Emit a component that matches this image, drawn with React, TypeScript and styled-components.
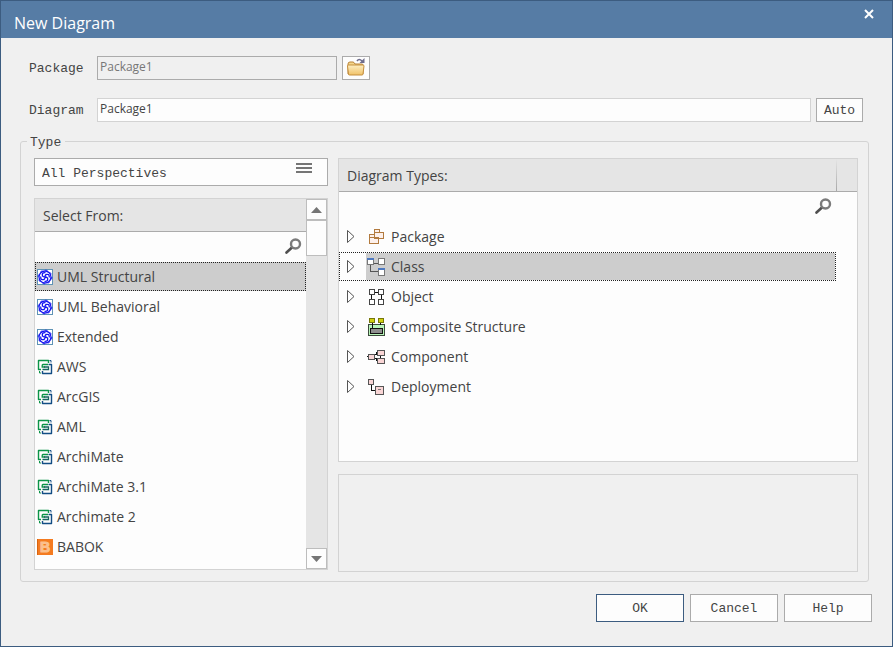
import React, { useState } from "react";
import styled, { createGlobalStyle, css } from "styled-components";

const ui = '"Open Sans", "Noto Sans", sans-serif';
const mono = '"Liberation Mono", monospace';
const ink = "#444444";
const line = "#d3d3d3";
const edge = "#ababab";

const GlobalStyle = createGlobalStyle`
  *, *::before, *::after { box-sizing: border-box; }
  body { margin: 0; background: #f0f0f0; color: ${ink}; font-family: ${ui}; }
  button, input, select { font: inherit; color: inherit; margin: 0; }
  ul { list-style: none; margin: 0; padding: 0; }
  svg { display: block; flex: none; }
`;

const Dialog = styled.main`
  display: flex;
  flex-direction: column;
  min-height: 100vh;
  border: 1px solid #3c5c80;
  background: #f0f0f0;
`;

const TitleBar = styled.header`
  display: flex;
  justify-content: space-between;
  align-items: flex-start;
  height: 37px;
  padding-left: 13px;
  background: #567ca5;
  color: #ffffff;
`;

const Title = styled.h1`
  margin: 0;
  font-size: 16px;
  font-weight: 400;
  line-height: 22px;
  padding-top: 11px;
`;

const CloseButton = styled.button`
  display: grid;
  place-items: center;
  width: 46px;
  height: 26px;
  padding: 0;
  border: 0;
  background: transparent;
`;

const Form = styled.form`
  display: flex;
  flex: 1;
  flex-direction: column;
  padding: 18px 20px 24px 19px;
`;

const Field = styled.div`
  display: flex;
  align-items: center;
  gap: 5px;
  height: 24px;
  margin: 0 9px 18px;
`;

const FieldLabel = styled.label`
  width: 63px;
  padding-top: 2px;
  font: 13px/18px ${mono};
`;

const TextBox = styled.input<{ $muted?: boolean }>`
  flex: ${(p) => (p.$muted ? "0 0 240px" : "1")};
  min-width: 0;
  height: 24px;
  padding: 0 2px 3px;
  border: 1px solid ${(p) => (p.$muted ? edge : line)};
  background: ${(p) => (p.$muted ? "#f0f0f0" : "#fdfdfd")};
  color: ${(p) => (p.$muted ? "#777777" : ink)};
  font-size: 12px;
`;

const PushButton = styled.button<{ $width: number; $main?: boolean }>`
  display: grid;
  place-items: center;
  width: ${(p) => p.$width}px;
  height: 100%;
  padding: 2px 0 0;
  border: 1px solid ${(p) => (p.$main ? "#3c5c80" : edge)};
  background: #fdfdfd;
  font: 13px/18px ${mono};
`;

const IconButton = styled(PushButton)`
  padding: 0;
`;

const Group = styled.fieldset`
  display: flex;
  flex: 1;
  min-width: 0;
  margin: -8px 3px 12px 0;
  padding: 7px 10px 11px 13px;
  border: 1px solid ${line};
  border-radius: 3px;
`;

const Legend = styled.legend`
  margin-left: -7px;
  padding: 2px 4px 0 3px;
  font: 13px/17px ${mono};
`;

const Columns = styled.div`
  display: grid;
  flex: 1;
  grid-template-columns: 294px minmax(0, 1fr);
  gap: 10px;
`;

const Column = styled.div`
  display: flex;
  flex-direction: column;
  gap: 12px;
`;

const Perspective = styled.div`
  position: relative;
  height: 28px;

  svg {
    position: absolute;
    top: 5px;
    right: 16px;
    pointer-events: none;
  }
`;

const PerspectiveSelect = styled.select`
  width: 100%;
  height: 100%;
  padding: 3px 40px 0 7px;
  border: 1px solid ${edge};
  border-radius: 0;
  background: #fdfdfd;
  appearance: none;
  font: 13px/18px ${mono};
`;

const Panel = styled.section`
  display: flex;
  flex: 1;
  border: 1px solid ${line};
  background: #fdfdfd;
`;

const PanelMain = styled.div`
  flex: 1;
  min-width: 0;
`;

const PanelHeader = styled.div`
  display: flex;
  justify-content: space-between;
  height: 33px;
  padding: 0 20px 0 8px;
  border-bottom: 1px solid ${edge};
  background: #e5e5e5;
`;

const PanelTitle = styled.h2`
  margin: 0;
  font-size: 14px;
  font-weight: 400;
  line-height: 33px;
`;

const HeaderRule = styled.span`
  width: 1px;
  background: linear-gradient(#e5e5e5, #a8a8a8);
`;

const SearchRow = styled.label<{ $inset: number }>`
  display: flex;
  align-items: center;
  height: 30px;
  padding-right: ${(p) => p.$inset}px;
  padding-bottom: 2px;
`;

const SearchInput = styled.input`
  flex: 1;
  min-width: 0;
  height: 28px;
  padding: 0 8px;
  border: 0;
  outline: 0;
  background: transparent;
  font-size: 14px;
`;

const rowBase = css<{ $selected: boolean }>`
  display: flex;
  align-items: center;
  width: 100%;
  height: 29px;
  margin-bottom: 1px;
  border: 1px dotted ${(p) => (p.$selected ? "#222222" : "transparent")};
  background: transparent;
  font-size: 14px;
  text-align: left;
`;

const SourceList = styled.ul`
  padding-bottom: 7px;
`;

const ListRow = styled.button<{ $selected: boolean }>`
  ${rowBase}
  gap: 4px;
  padding: 0 1px;
  ${(p) => p.$selected && "background: #cdcdcd;"}
`;

const TypeList = styled.ul`
  padding-right: 21px;
`;

const TypeRow = styled.button<{ $selected: boolean }>`
  ${rowBase}
  padding: 0 0 0 7px;
`;

const TypeName = styled.span<{ $selected: boolean }>`
  display: flex;
  flex: 1;
  align-items: center;
  align-self: stretch;
  gap: 6px;
  margin-left: 11px;
  padding-left: 1px;
  background: ${(p) => (p.$selected ? "#cdcdcd" : "transparent")};
`;

const ScrollBar = styled.div`
  display: flex;
  flex-direction: column;
  width: 21px;
  background: #e5e5e5;
`;

const ScrollButton = styled.button`
  display: grid;
  place-items: center;
  height: 21px;
  padding: 0;
  border: 1px solid #bdbdbd;
  background: #fdfdfd;
`;

const ScrollTrack = styled.div`
  flex: 1;
`;

const ScrollThumb = styled.div`
  height: 36px;
  border: 1px solid #bdbdbd;
  background: #fdfdfd;
`;

const Notes = styled.section`
  height: 98px;
  border: 1px solid ${line};
`;

const NotesColumn = styled(Column)`
  margin-bottom: -2px;
`;

const Actions = styled.footer`
  display: flex;
  justify-content: flex-end;
  gap: 6px;
  height: 28px;
`;

const CloseIcon = () => (
  <svg width="10" height="10" viewBox="0 0 10 10">
    <path d="M1 1 9 9M9 1 1 9" stroke="#fff" strokeWidth="2" />
  </svg>
);

const FolderIcon = () => (
  <svg width="20" height="20" viewBox="0 0 20 20">
    <defs>
      <linearGradient id="folder" x1="0" y1="0" x2="0" y2="1">
        <stop offset="0" stopColor="#fdeec2" />
        <stop offset="1" stopColor="#f0c268" />
      </linearGradient>
    </defs>
    <path d="M2 16V6q0-2 2-2h3q1 0 2 2h7q1 0 1 1v9z" fill="#f4d58a" stroke="#b88339" />
    <path d="M1.5 8q0-1 1-1H17q1 0 1 1l-1 8q0 1-1 1H3.500q-1 0-1-1z" fill="url(#folder)" stroke="#c58f3f" />
    <path d="M11 3q2-3 5 0" fill="none" stroke="#6f6d8c" strokeWidth="1.500" />
    <path d="M18.500 0v5h-5z" fill="#6f6d8c" />
  </svg>
);

const MenuIcon = () => (
  <svg width="16" height="11" viewBox="0 0 16 11">
    <path d="M0 0h16v2H0zM0 4h16v2H0zM0 8h16v2H0z" fill="#757575" />
  </svg>
);

const SearchIcon = () => (
  <svg width="17" height="16" viewBox="0 0 17 16">
    <path d="M7.500 9 1.500 14.500" stroke="#4f4f4f" strokeWidth="2.600" strokeLinecap="round" />
    <circle cx="10.500" cy="6" r="4.500" fill="#fff" stroke="#7b7b7b" strokeWidth="2.400" />
  </svg>
);

const Arrow = ({ down = false }: { down?: boolean }) => (
  <svg width="11" height="6" viewBox="0 0 11 6">
    <path d={down ? "M0 0h11L5.500 6z" : "M0 6h11L5.500 0z"} fill="#757575" />
  </svg>
);

const Expander = () => (
  <svg width="8" height="13" viewBox="0 0 8 13">
    <path d="M.5.5v12l6.500-6z" fill="#fdfdfd" stroke="#555" />
  </svg>
);

const UmlIcon = () => (
  <svg width="16" height="16" viewBox="0 0 16 16">
    <rect x=".5" y=".5" width="15" height="15" fill="#fff" stroke="#5f93b5" />
    <circle cx="8" cy="8" r="6" fill="none" stroke="#1818f0" strokeWidth="1.300" />
    <circle cx="8" cy="8" r="6.800" fill="none" stroke="#1818f0" strokeWidth="1" strokeDasharray="2.300 3.040" />
    <g fill="none" stroke="#1414f0" strokeWidth="1.300">
      <path d="M8 8Q4.500 8 5.500 4.500q1-1 3-.8M8 8Q8 4.500 11.500 5.500q1 1 .8 3M8 8Q11.500 8 10.500 11.500q-1 1-3 .8M8 8Q8 11.500 4.500 10.500q-1-1-.8-3" />
    </g>
  </svg>
);

const TechIcon = () => (
  <svg width="16" height="16" viewBox="0 0 16 16" fill="none">
    <path d="M4 10.500H1.500v-9h10V4" stroke="#0b9447" strokeWidth="1.400" strokeLinejoin="round" />
    <path d="M11.500 5.500h3v9h-9V12" stroke="#124d84" strokeWidth="1.400" strokeLinejoin="round" />
    <path d="M11 5.500H6q-.8 0-.8 1V8H8" stroke="#0b9447" strokeWidth="1.300" />
    <path d="M7 8h4.500v2.500H5.500" stroke="#16645f" strokeWidth="1.300" />
    <path d="M12.500 1.500h1.500v2" stroke="#124d84" />
    <path d="M2.500 12v2H4" stroke="#0b9447" />
  </svg>
);

const BabokIcon = () => (
  <svg width="16" height="16" viewBox="0 0 16 16">
    <rect width="16" height="16" fill="#f47b20" />
    <rect width="1" height="16" fill="#d9640f" />
    <text
      x="8"
      y="13"
      textAnchor="middle"
      fontFamily="Liberation Sans, sans-serif"
      fontSize="14"
      fontWeight="700"
      fill="#fbc08d"
      stroke="#fbc08d"
    >
      B
    </text>
  </svg>
);

const Drawing = ({ children, start = -1 }: { children: React.ReactNode; start?: number }) => (
  <svg width="18" height="18" viewBox={`${start} 0 18 18`} shapeRendering="crispEdges">
    {children}
  </svg>
);

const PackageIcon = () => (
  <Drawing>
    <g fill="#fdf0eb" stroke="#b27a3e">
      <path d="M6.500 4.500v-3h5v3M6.500 4.500h9v6h-9zM1.500 9.500v-3h5v3M1.500 9.500h9v6h-9z" />
    </g>
  </Drawing>
);

const ClassIcon = () => (
  <Drawing start={0}>
    <path d="M3.500 7v6.500H11M7 5.500h4" fill="none" stroke="#555" />
    <g fill="#fff" stroke="#777">
      <path d="M.5.500h6v6h-6zM11.500.500h6v6h-6zM11.500 10.500h6v7h-6z" />
    </g>
    <path d="M0 1h7M11 11h7" stroke="#4d78c0" strokeWidth="2" />
  </Drawing>
);

const ObjectIcon = () => (
  <Drawing>
    <path d="M7 4.500h3M3.500 7v4M13.500 7v4" stroke="#111" />
    <g fill="#fff" stroke="#444">
      <path d="M1.500 1.500h5v5h-5zM10.500 1.500h5v5h-5zM1.500 11.500h5v5h-5zM10.500 11.500h5v5h-5z" />
    </g>
  </Drawing>
);

const CompositeIcon = () => (
  <Drawing>
    <path d="M.5 6.500h16v11H.5z" fill="#b9f5b9" stroke="#3c4a3c" />
    <path d="M4.500 4v6M12.500 4v3" stroke="#111" />
    <path d="M1.500.500h5v4h-5zM10.500.500h5v4h-5z" fill="#cfcf10" stroke="#77770a" />
    <path d="M2.500 10.500h12v5h-12z" fill="#8e8e8e" stroke="#111" />
  </Drawing>
);

const ComponentIcon = () => (
  <Drawing>
    <path d="M-1 8.500h3M7 6.500h1.500v-2H10M7 10.500h1.500v2H10M12.500 7v3" fill="none" stroke="#111" />
    <g fill="#f9d5d5" stroke="#555">
      <path d="M.5 6.500h6v5h-6zM9.500 2.500h7v5h-7zM9.500 10.500h7v5h-7z" />
    </g>
  </Drawing>
);

const DeploymentIcon = () => (
  <Drawing>
    <path d="M3.500 6v6.500H8" fill="none" stroke="#111" />
    <g fill="#f9d5d5" stroke="#555">
      <path d="M.5 1.500h5v5h-5zM7.500 8.500h8v8h-8z" />
    </g>
    <path d="M10 11.500h3" stroke="#777" />
  </Drawing>
);

const sources = [
  { name: "UML Structural", Icon: UmlIcon },
  { name: "UML Behavioral", Icon: UmlIcon },
  { name: "Extended", Icon: UmlIcon },
  { name: "AWS", Icon: TechIcon },
  { name: "ArcGIS", Icon: TechIcon },
  { name: "AML", Icon: TechIcon },
  { name: "ArchiMate", Icon: TechIcon },
  { name: "ArchiMate 3.1", Icon: TechIcon },
  { name: "Archimate 2", Icon: TechIcon },
  { name: "BABOK", Icon: BabokIcon },
];

const types = [
  { name: "Package", Icon: PackageIcon },
  { name: "Class", Icon: ClassIcon },
  { name: "Object", Icon: ObjectIcon },
  { name: "Composite Structure", Icon: CompositeIcon },
  { name: "Component", Icon: ComponentIcon },
  { name: "Deployment", Icon: DeploymentIcon },
];

export default function App() {
  const [source, setSource] = useState("UML Structural");
  const [type, setType] = useState("Class");
  const [name, setName] = useState("Package1");

  return (
    <>
      <GlobalStyle />
      <Dialog>
        <TitleBar>
          <Title>New Diagram</Title>
          <CloseButton type="button" aria-label="Close">
            <CloseIcon />
          </CloseButton>
        </TitleBar>
        <Form onSubmit={(e) => e.preventDefault()}>
          <Field>
            <FieldLabel htmlFor="package">Package</FieldLabel>
            <TextBox id="package" $muted readOnly value="Package1" />
            <IconButton type="button" $width={28} aria-label="Browse">
              <FolderIcon />
            </IconButton>
          </Field>
          <Field>
            <FieldLabel htmlFor="diagram">Diagram</FieldLabel>
            <TextBox id="diagram" value={name} onChange={(e) => setName(e.target.value)} />
            <PushButton type="button" $width={47}>Auto</PushButton>
          </Field>
          <Group>
            <Legend>Type</Legend>
            <Columns>
              <Column>
                <Perspective>
                  <PerspectiveSelect aria-label="Perspective">
                    <option>All Perspectives</option>
                  </PerspectiveSelect>
                  <MenuIcon />
                </Perspective>
                <Panel>
                  <PanelMain>
                    <PanelHeader>
                      <PanelTitle>Select From:</PanelTitle>
                    </PanelHeader>
                    <SearchRow $inset={4}>
                      <SearchInput type="text" aria-label="Search list" />
                      <SearchIcon />
                    </SearchRow>
                    <SourceList>
                      {sources.map(({ name: label, Icon }) => (
                        <li key={label}>
                          <ListRow
                            type="button"
                            $selected={label === source}
                            aria-pressed={label === source}
                            onClick={() => setSource(label)}
                          >
                            <Icon />
                            {label}
                          </ListRow>
                        </li>
                      ))}
                    </SourceList>
                  </PanelMain>
                  <ScrollBar>
                    <ScrollButton type="button" aria-label="Scroll up">
                      <Arrow />
                    </ScrollButton>
                    <ScrollTrack>
                      <ScrollThumb />
                    </ScrollTrack>
                    <ScrollButton type="button" aria-label="Scroll down">
                      <Arrow down />
                    </ScrollButton>
                  </ScrollBar>
                </Panel>
              </Column>
              <NotesColumn>
                <Panel>
                  <PanelMain>
                    <PanelHeader>
                      <PanelTitle>Diagram Types:</PanelTitle>
                      <HeaderRule />
                    </PanelHeader>
                    <SearchRow $inset={25}>
                      <SearchInput type="text" aria-label="Search diagram types" />
                      <SearchIcon />
                    </SearchRow>
                    <TypeList>
                      {types.map(({ name: label, Icon }) => (
                        <li key={label}>
                          <TypeRow
                            type="button"
                            $selected={label === type}
                            aria-pressed={label === type}
                            onClick={() => setType(label)}
                          >
                            <Expander />
                            <TypeName $selected={label === type}>
                              <Icon />
                              {label}
                            </TypeName>
                          </TypeRow>
                        </li>
                      ))}
                    </TypeList>
                  </PanelMain>
                </Panel>
                <Notes />
              </NotesColumn>
            </Columns>
          </Group>
          <Actions>
            <PushButton type="submit" $width={88} $main>OK</PushButton>
            <PushButton type="button" $width={88}>Cancel</PushButton>
            <PushButton type="button" $width={88}>Help</PushButton>
          </Actions>
        </Form>
      </Dialog>
    </>
  );
}
